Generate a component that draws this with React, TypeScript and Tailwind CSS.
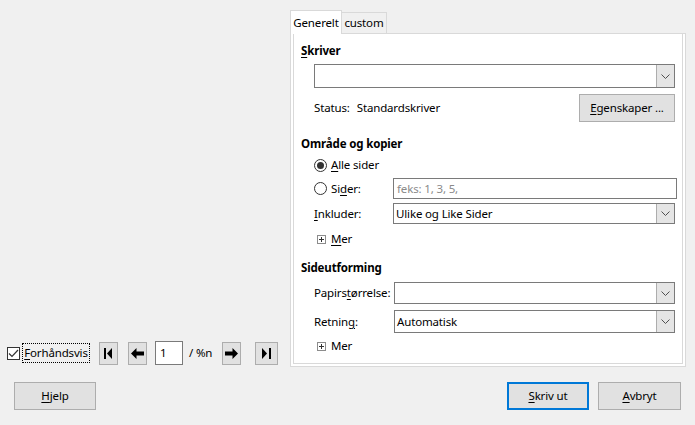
import React from 'react';

const FONT = { fontFamily: '"Noto Sans", "Open Sans", sans-serif' };

function U({ children }: { children: React.ReactNode }) {
  return <span className="underline underline-offset-2">{children}</span>;
}

function Chevron() {
  return (
    <svg width="9" height="5" viewBox="0 0 9 5" fill="none">
      <path d="M0.5 0.5 L4.5 4.5 L8.5 0.5" stroke="#505050" strokeWidth="1" />
    </svg>
  );
}

function Select({ value, h = 'h-[21px]' }: { value?: string; h?: string }) {
  return (
    <div className={`flex-1 ${h} flex border border-[#7a7a7a] bg-white`}>
      <div className="flex-1 flex items-center pl-[2px] text-black">{value}</div>
      <div className="w-[18px] border-l border-[#adadad] bg-[#e5e5e5] flex items-center justify-center">
        <Chevron />
      </div>
    </div>
  );
}

function Radio({ checked }: { checked?: boolean }) {
  return (
    <div className="w-[13px] h-[13px] rounded-full border border-[#333333] bg-white flex items-center justify-center">
      {checked && <div className="w-[7px] h-[7px] rounded-full bg-[#333333]" />}
    </div>
  );
}

function PlusBox() {
  return (
    <svg width="9" height="9" viewBox="0 0 9 9">
      <rect x="0.5" y="0.5" width="8" height="8" fill="white" stroke="#8c8c8c" />
      <path d="M2 4.5 H7 M4.5 2 V7" stroke="#333" strokeWidth="1" />
    </svg>
  );
}

function NavBtn({ children, className = '' }: { children: React.ReactNode; className?: string }) {
  return (
    <div className={`w-[19px] h-[23px] bg-[#e1e1e1] border border-[#adadad] flex items-center justify-center ${className}`}>
      {children}
    </div>
  );
}

function Button({ children, primary, className = '' }: { children: React.ReactNode; primary?: boolean; className?: string }) {
  return (
    <div
      className={`h-[28px] bg-[#e1e1e1] flex items-center justify-center text-black ${
        primary ? 'border-2 border-[#0078d7]' : 'border border-[#adadad]'
      } ${className}`}
    >
      {children}
    </div>
  );
}

export default function App() {
  return (
    <div style={FONT} className="w-[695px] h-[425px] bg-[#f0f0f0] text-[11.5px] tracking-[-0.15px] text-black flex flex-col overflow-hidden">
      <div className="flex pt-[9px] h-[367px]">
        {/* preview controls */}
        <div className="w-[290px] flex flex-col justify-end pb-[2px]">
          <div className="flex items-center h-[24px] pl-[7px]">
            <div className="w-[13px] h-[13px] border border-[#333333] bg-white flex items-center justify-center">
              <svg width="11" height="9" viewBox="0 0 11 9" fill="none">
                <path d="M1 4.5 L4 7.5 L10 1" stroke="#333" strokeWidth="1.2" />
              </svg>
            </div>
            <div className="ml-[2px] w-[68px] h-[20px] flex items-center justify-center border border-dotted border-black leading-none">
              <span><U>F</U>orhåndsvis</span>
            </div>
            <NavBtn className="ml-[9px]">
              <svg width="9" height="11" viewBox="0 0 9 11">
                <rect x="0" y="0" width="2" height="11" fill="#000" />
                <polygon points="8,0 3,5.5 8,11" fill="#000" />
              </svg>
            </NavBtn>
            <NavBtn className="ml-[10px]">
              <svg width="13" height="11" viewBox="0 0 13 11">
                <polygon points="0,5.5 5.5,0 5.5,3.5 13,3.5 13,7.5 5.5,7.5 5.5,11" fill="#000" />
              </svg>
            </NavBtn>
            <div className="ml-[8px] w-[28px] h-[24px] bg-white border border-[#7a7a7a] flex items-center pl-[4px]">1</div>
            <div className="ml-[6px] w-[33px] text-[#000]">/ %n</div>
            <NavBtn>
              <svg width="13" height="11" viewBox="0 0 13 11">
                <polygon points="13,5.5 7.5,0 7.5,3.5 0,3.5 0,7.5 7.5,7.5 7.5,11" fill="#000" />
              </svg>
            </NavBtn>
            <NavBtn className="ml-[14px] w-[23px]">
              <svg width="9" height="11" viewBox="0 0 9 11">
                <polygon points="0,0 5,5.5 0,11" fill="#000" />
                <rect x="7" y="0" width="2" height="11" fill="#000" />
              </svg>
            </NavBtn>
          </div>
        </div>

        {/* tabbed panel */}
        <div className="w-[396px] flex flex-col">
          <div className="flex items-end h-[24px]">
            <div className="h-[24px] w-[52px] bg-white border border-b-0 border-[#d9d9d9] flex items-center justify-center -mb-[1px] relative z-10">
              Generelt
            </div>
            <div className="h-[21px] w-[45px] bg-[#f0f0f0] border border-l-0 border-b-0 border-[#d9d9d9] flex items-center justify-center">
              custom
            </div>
          </div>
          <div className="flex-1 bg-white border border-[#d9d9d9] px-[2px] pb-[2px]">
            <div className="h-full border border-[#d9d9d9] border-t-0 pl-[7px] pr-[7px] flex flex-col">
              <div className="h-[20px] mt-[7px] flex items-center font-bold">
                <span><U>S</U>kriver</span>
              </div>
              <div className="mt-[3px] pl-[13px] flex">
                <Select h="h-[24px]" />
              </div>
              <div className="mt-[6px] h-[27px] pl-[13px] flex items-center">
                <span>Status:</span>
                <span className="ml-[7px] flex-1">Standardskriver</span>
                <Button className="w-[96px] h-[27px]">
                  <span><U>E</U>genskaper ...</span>
                </Button>
              </div>

              <div className="h-[20px] mt-[13px] flex items-center font-bold">Område og kopier</div>
              <div className="h-[20px] mt-[1px] pl-[13px] flex items-center">
                <Radio checked />
                <span className="ml-[4px]"><U>A</U>lle sider</span>
              </div>
              <div className="h-[21px] mt-[3px] pl-[13px] flex items-center">
                <div className="w-[79px] flex items-center">
                  <Radio />
                  <span className="ml-[4px]">Si<U>d</U>er:</span>
                </div>
                <div className="flex-1 h-[21px] border border-[#7a7a7a] bg-white flex items-center pl-[3px] text-[#8a8a8a] mr-[-2px]">
                  feks: 1, 3, 5,
                </div>
              </div>
              <div className="h-[21px] mt-[4px] pl-[13px] flex items-center">
                <div className="w-[79px]"><U>I</U>nkluder:</div>
                <Select value="Ulike og Like Sider" />
              </div>
              <div className="h-[20px] mt-[5px] pl-[16px] flex items-center">
                <PlusBox />
                <span className="ml-[5px]"><U>M</U>er</span>
              </div>

              <div className="h-[20px] mt-[9px] flex items-center font-bold">Sideutforming</div>
              <div className="h-[22px] mt-[4px] pl-[13px] flex items-center">
                <div className="w-[80px] whitespace-nowrap">Papirs<U>t</U>ørrelse:</div>
                <Select h="h-[22px]" />
              </div>
              <div className="h-[23px] mt-[6px] pl-[13px] flex items-center">
                <div className="w-[80px]">Retnin<U>g</U>:</div>
                <Select value="Automatisk" h="h-[23px]" />
              </div>
              <div className="h-[20px] mt-[3px] pl-[16px] flex items-center">
                <PlusBox />
                <span className="ml-[5px]">Mer</span>
              </div>
            </div>
          </div>
        </div>
      </div>

      <div className="flex items-center mt-[15px] px-[14px]">
        <Button className="w-[82px]"><span><U>H</U>jelp</span></Button>
        <div className="flex-1" />
        <Button primary className="w-[82px]"><span><U>S</U>kriv ut</span></Button>
        <Button className="w-[83px] ml-[9px]"><span><U>A</U>vbryt</span></Button>
      </div>
    </div>
  );
}
